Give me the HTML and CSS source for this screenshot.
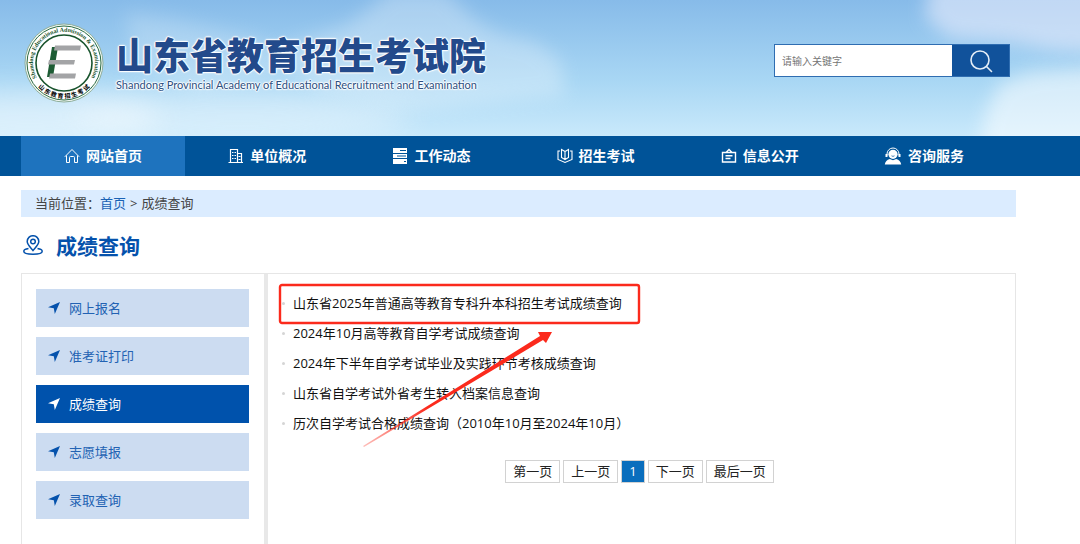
FILE: index.html
```html
<!DOCTYPE html>
<html lang="zh-CN">

<head>
    <meta charset="UTF-8">
    <meta name="viewport" content="width=device-width, initial-scale=1.0">
    <title>成绩查询</title>
    <link rel="stylesheet" href="styles.css">
</head>

<body>
    <header class="header">
        <svg class="sky" viewBox="0 0 1080 136" preserveAspectRatio="none" aria-hidden="true">
            <defs>
                <filter id="soft" x="-50%" y="-100%" width="200%" height="300%">
                    <feGaussianBlur stdDeviation="14" />
                </filter>
                <filter id="puff" x="-50%" y="-50%" width="200%" height="200%">
                    <feGaussianBlur stdDeviation="9" />
                </filter>
            </defs>
            <g fill="#fff">
                <ellipse cx="30" cy="118" rx="130" ry="28" opacity=".42" filter="url(#soft)" />
                <ellipse cx="240" cy="116" rx="170" ry="26" opacity=".34" filter="url(#soft)" />
                <path d="M125 12 L170 18 L215 28 L265 40 L290 70 L200 90 L135 64z" opacity=".2" filter="url(#puff)" />
                <path d="M370 8 L390 -10 L445 -10 L475 20 L500 34 L535 42 L560 60 L565 95 L420 110 L320 90 L270 50 L345 26z" opacity=".28" filter="url(#puff)" />
                <path d="M930 -20 L1120 -20 L1120 54 L1050 50 L1010 42 L950 38 L925 18z" fill="#e6ebfc" opacity=".62" filter="url(#puff)" />
                <path d="M1000 84 L1030 72 L1120 66 L1120 160 L980 160 L985 115z" opacity=".52" filter="url(#puff)" />
            </g>
        </svg>
        <div class="header-inner">
            <a class="brand" href="#">
                <svg class="emblem" viewBox="0 0 80 80" aria-hidden="true">
                    <defs>
                        <path id="arcTop" d="M13.600 56 A31 31 0 1 1 66.400 56" />
                        <path id="arcBottom" d="M9 57 A35.5 35.5 0 0 0 71 57" />
                    </defs>
                    <circle cx="40" cy="40" r="39" fill="#f4faf6" stroke="#8fae9a" stroke-width="1" />
                    <circle cx="40" cy="40" r="37" fill="#fff" stroke="#2c6b43" stroke-width="1" />
                    <circle cx="40" cy="40" r="28" fill="#fff" stroke="#17532c" stroke-width="1.6" />
                    <text class="ring-en"><textPath href="#arcTop" startOffset="50%" text-anchor="middle">Shandong Educational Admission &amp; Examination</textPath></text>
                    <text class="ring-cn"><textPath href="#arcBottom" startOffset="50%" text-anchor="middle">山 东 教 育 招 生 考 试</textPath></text>
                    <path d="M28 24 L34 24 L29 54 L23 54z" fill="#1d5c34" />
                    <path d="M31 22.500 H57 L56 27.500 H30z M25 37 H51 L50 41.500 H24z M26 50.500 H52 L51 55.500 H25z" fill="#a3a4a6" />
                </svg>
                <span class="brand-text">
                    <span class="brand-cn">山东省教育招生考试院</span>
                    <span class="brand-en">Shandong Provincial Academy of Educational Recruitment and Examination</span>
                </span>
            </a>
            <form class="search">
                <input type="text" placeholder="请输入关键字" aria-label="请输入关键字">
                <button type="submit" aria-label="搜索">
                    <svg viewBox="0 0 24 24" fill="none" stroke="#e4edf7" stroke-width="1.6" stroke-linecap="round">
                        <circle cx="11" cy="11" r="9" />
                        <path d="M17.500 17.500 L22.500 22.500" />
                    </svg>
                </button>
            </form>
        </div>
    </header>

    <nav class="nav">
        <ul>
            <li class="active"><a href="#">
                <svg viewBox="0 0 16 16" fill="none" stroke="currentColor" stroke-width="1">
                    <path d="M.8 8.800 L8 1.500 L15.200 8.800 M2.500 7.500 V14.500 H5.500 V9.500 Q5.500 8.500 6.500 8.500 H9.500 Q10.500 8.500 10.500 9.500 V14.500 H13.500 V7.500" />
                </svg>网站首页</a></li>
            <li><a href="#">
                <svg viewBox="0 0 16 16" fill="none" stroke="currentColor" stroke-width="1.2">
                    <path d="M.5 14.500 H15 M2.500 14.500 V1.500 H9.500 V14.500 M9.500 5.500 H13.500 V14.500 M4 4.500 H5.500 M6.500 4.500 H8 M4 7.500 H5.500 M6.500 7.500 H8 M4 10.500 H5.500 M6.500 10.500 H8 M10.500 8.500 H12.500 M10.500 11.500 H12.500" />
                </svg>单位概况</a></li>
            <li><a href="#">
                <svg viewBox="0 0 16 16" fill="currentColor">
                    <path fill-rule="evenodd" d="M1 0 H15 V5 H1z M8 2 V3 H14 V2z M1 6 H15 V10 H1z M5 7.500 V8.500 H14 V7.500z M1 11 H15 V16 H1z M12 13 V14 H14 V13z" />
                </svg>工作动态</a></li>
            <li><a href="#">
                <svg viewBox="0 0 16 16" fill="none" stroke="currentColor" stroke-width="1.1">
                    <path d="M8 3.500 L4.500 1.500 V9.500 L8 11.500 L11.500 9.500 V1.500 L8 3.500 V11.500 M3 3 H1 V11.500 L8 14.500 L15 11.500 V3 H13" />
                </svg>招生考试</a></li>
            <li><a href="#">
                <svg viewBox="0 0 16 16" fill="none" stroke="currentColor" stroke-width="1.4">
                    <path d="M1.500 4.500 H14.500 V14 H1.500z M5 4.500 L8 1.500 L11 4.500 M4.500 7.700 H11.500 M4.500 10.500 H9.500" />
                </svg>信息公开</a></li>
            <li><a href="#">
                <svg class="big" viewBox="0 0 18 18">
                    <path d="M3 8.500 V7 A6 6 0 0 1 15 7 V8.500" fill="none" stroke="currentColor" stroke-width="1" />
                    <circle cx="9" cy="7.300" r="4.600" fill="currentColor" />
                    <path d="M1.500 7 H3.500 V10 H1.500z M14.500 7 H16.500 V10 H14.500z M.8 17.500 Q1.500 13 5.800 12 L9 13.300 L12.200 12 Q16.500 13 17.200 17.500z" fill="currentColor" />
                    <path d="M7.500 8.800 Q9 10 10.500 8.800" fill="none" stroke="#005398" stroke-width=".7" />
                </svg>咨询服务</a></li>
        </ul>
    </nav>

    <main class="container">
        <div class="breadcrumb"><span>当前位置：<a href="#">首页</a></span><span>&gt;</span><span>成绩查询</span></div>

        <h1 class="page-title">
            <svg viewBox="0 0 20 20" fill="none" stroke="currentColor" stroke-width="1.500">
                <path d="M10 15.500 C7 12 4.200 9.500 4.200 6.500 A5.800 5.800 0 0 1 15.800 6.500 C15.800 9.500 13 12 10 15.500z" />
                <circle cx="10" cy="6.500" r="2.300" />
                <path d="M5.500 13.500 C2.500 14 .8 15 .8 16.200 C.8 18 5 19.200 10 19.200 C15 19.200 19.200 18 19.200 16.200 C19.200 15 17.500 14 14.500 13.500" />
            </svg>
            成绩查询
        </h1>

        <div class="panel">
            <aside class="sidebar">
                <ul>
                    <li><a href="#"><svg viewBox="0 0 12 12"><path d="M0 5.200 L12 0 L6.800 12 L5.800 6.200z" /></svg>网上报名</a></li>
                    <li><a href="#"><svg viewBox="0 0 12 12"><path d="M0 5.200 L12 0 L6.800 12 L5.800 6.200z" /></svg>准考证打印</a></li>
                    <li class="active"><a href="#"><svg viewBox="0 0 12 12"><path d="M0 5.200 L12 0 L6.800 12 L5.800 6.200z" /></svg>成绩查询</a></li>
                    <li><a href="#"><svg viewBox="0 0 12 12"><path d="M0 5.200 L12 0 L6.800 12 L5.800 6.200z" /></svg>志愿填报</a></li>
                    <li><a href="#"><svg viewBox="0 0 12 12"><path d="M0 5.200 L12 0 L6.800 12 L5.800 6.200z" /></svg>录取查询</a></li>
                </ul>
            </aside>

            <section class="content">
                <ul class="list">
                    <li><a href="#">山东省2025年普通高等教育专科升本科招生考试成绩查询</a></li>
                    <li><a href="#">2024年10月高等教育自学考试成绩查询</a></li>
                    <li><a href="#">2024年下半年自学考试毕业及实践环节考核成绩查询</a></li>
                    <li><a href="#">山东省自学考试外省考生转入档案信息查询</a></li>
                    <li><a href="#">历次自学考试合格成绩查询（2010年10月至2024年10月）</a></li>
                </ul>

                <div class="pager">
                    <a href="#">第一页</a>
                    <a href="#">上一页</a>
                    <a href="#" class="current">1</a>
                    <a href="#">下一页</a>
                    <a href="#">最后一页</a>
                </div>

                <!-- highlight box and arrow over the first entry -->
                <svg class="mark" viewBox="0 0 364 166" aria-hidden="true">
                    <defs>
                        <linearGradient id="fade" gradientUnits="userSpaceOnUse" x1="86" y1="164" x2="150" y2="124">
                            <stop offset="0" stop-color="#fb2a1c" stop-opacity=".3" />
                            <stop offset="1" stop-color="#fb2a1c" />
                        </linearGradient>
                    </defs>
                    <rect x="2" y="2" width="359" height="38" rx="2" fill="none" stroke="#fb2a1c" stroke-width="2.400" />
                    <path d="M85 163 L262 53 L260 49 L274 49 L268 60 L265 57 L220 84 L86 164z" fill="url(#fade)" />
                </svg>
            </section>
        </div>
    </main>
</body>

</html>
```

FILE: styles.css
```css
/* Global Styles */
* {
    box-sizing: border-box;
}

body {
    margin: 0;
    font-family: "Open Sans", "Noto Sans CJK SC", sans-serif;
    font-size: 13px;
    background-color: #fff;
    color: #333;
}

a {
    text-decoration: none;
    color: inherit;
}

ul {
    list-style: none;
    margin: 0;
    padding: 0;
}

/* Header */
.header {
    position: relative;
    height: 136px;
    background: linear-gradient(#87bbe9, #a9d7f4 60%, #c9e9fb);
    overflow: hidden;
}

.sky {
    position: absolute;
    top: 0;
    left: 0;
    width: 100%;
    height: 100%;
}

.header-inner {
    position: relative;
    display: flex;
    justify-content: space-between;
    align-items: flex-start;
    padding: 23px 70px 0 24px;
}

.brand {
    display: flex;
    gap: 12px;
}

.emblem {
    width: 80px;
    height: 80px;
}

.ring-en {
    font-family: "Liberation Serif", serif;
    font-size: 6px;
    font-weight: bold;
    fill: #17532c;
}

.ring-cn {
    font-family: "Noto Sans CJK SC", sans-serif;
    font-size: 6px;
    font-weight: 900;
    fill: #111;
}

.brand-text {
    display: flex;
    flex-direction: column;
    padding-top: 8px;
    white-space: nowrap;
    text-shadow: 1px 0 1px #fff, -1px 0 1px #fff, 0 1px 1px #fff, 0 -1px 1px #fff, 0 0 3px #fff;
}

.brand-cn {
    font-family: "Noto Sans CJK SC", sans-serif;
    font-size: 37px;
    line-height: 46px;
    font-weight: 900;
    color: #234a8b;
}

.brand-en {
    font-family: Lato, sans-serif;
    font-size: 11px;
    line-height: 16px;
    color: #2d5081;
}

.search {
    display: flex;
    height: 33px;
    margin-top: 21px;
    border: 1px solid #2f6db1;
}

.search input {
    width: 177px;
    padding: 0 7px;
    border: none;
    background-color: #fff;
    font-family: inherit;
    font-size: 10px;
    outline: none;
}

.search input::placeholder {
    color: #757575;
}

.search button {
    display: flex;
    align-items: center;
    justify-content: center;
    width: 57px;
    padding: 0;
    border: none;
    background-color: #11529b;
    cursor: pointer;
}

.search button svg {
    width: 24px;
    height: 24px;
}

/* Navigation */
.nav {
    padding: 0 74px 0 21px;
    background-color: #005398;
}

.nav ul {
    display: grid;
    grid-template-columns: repeat(6, 1fr);
}

.nav a {
    display: flex;
    align-items: center;
    justify-content: center;
    gap: 6px;
    height: 40px;
    line-height: 40px;
    font-size: 14px;
    font-weight: bold;
    color: #fff;
}

.nav svg {
    width: 16px;
    height: 16px;
}

.nav svg.big {
    width: 18px;
    height: 18px;
}

.nav .active,
.nav li:hover {
    background-color: #1e73be;
}

/* Content */
.container {
    margin: 14px 64px 0 21px;
}

.breadcrumb {
    display: flex;
    gap: 4px;
    padding: 0 14px;
    line-height: 27px;
    background-color: #dbecff;
    color: #444;
}

.breadcrumb a {
    color: #1a62b5;
}

.page-title {
    display: flex;
    align-items: center;
    gap: 13px;
    height: 56px;
    margin: 0;
    padding-left: 2px;
    font-size: 21px;
    color: #0552ac;
}

.page-title svg {
    width: 20px;
    height: 20px;
}

.panel {
    display: flex;
    border: 1px solid #e6e6e6;
    border-bottom: none;
}

.sidebar {
    flex: 0 0 246px;
    padding: 15px 15px 25px 14px;
    border-right: 4px solid #e8e8e8;
}

.sidebar ul {
    display: grid;
    gap: 10px;
}

.sidebar a {
    display: flex;
    align-items: center;
    gap: 9px;
    height: 38px;
    line-height: 38px;
    padding-left: 12px;
    background-color: #ccdcf1;
    color: #2262b3;
}

.sidebar svg {
    width: 12px;
    height: 12px;
    fill: #0552ac;
}

.sidebar .active a {
    background-color: #0052ac;
    color: #fff;
}

.sidebar .active svg {
    fill: #fff;
}

.content {
    position: relative;
    flex: 1;
    padding: 14px 18px 14px 14px;
}

.list li {
    display: flex;
    align-items: center;
    gap: 8px;
    line-height: 30px;
    color: #111;
}

.list li::before {
    content: "";
    width: 3px;
    height: 3px;
    border-radius: 50%;
    background-color: #d5d5d5;
}

.pager {
    display: flex;
    justify-content: center;
    gap: 3px;
    margin-top: 22px;
}

.pager a {
    padding: 0 7px;
    border: 1px solid #d2d2d2;
    line-height: 21px;
    color: #222;
}

.pager .current {
    background-color: #0a6ebd;
    color: #fff;
}

.mark {
    position: absolute;
    top: 9px;
    left: 10px;
    width: 364px;
    height: 166px;
    pointer-events: none;
}
```
